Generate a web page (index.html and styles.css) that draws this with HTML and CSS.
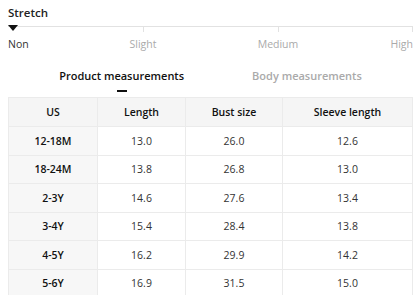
FILE: index.html
```html
<!DOCTYPE html>
<html lang="en">
<head>
  <meta charset="UTF-8" />
  <title>Size guide</title>
  <link rel="stylesheet" href="styles.css">
</head>
<body>
  <div class="page">

    <!-- === STRETCH === -->
    <div class="stretch">
      <div class="stretch-title">Stretch</div>
      <div class="track">
        <span class="pointer"></span>
        <span class="tick t1"></span>
        <span class="tick t2"></span>
        <span class="tick t3"></span>
      </div>
      <div class="levels">
        <span class="lvl non active">Non</span>
        <span class="lvl slight">Slight</span>
        <span class="lvl medium">Medium</span>
        <span class="lvl high">High</span>
      </div>
    </div>

    <!-- === TABS === -->
    <div class="tabs">
      <div class="tab active">Product measurements</div>
      <div class="tab">Body measurements</div>
    </div>

    <!-- === TABLE === -->
    <table class="sizes">
      <thead>
        <tr><th>US</th><th>Length</th><th>Bust size</th><th>Sleeve length</th></tr>
      </thead>
      <tbody>
        <tr><th>12-18M</th><td>13.0</td><td>26.0</td><td>12.6</td></tr>
        <tr><th>18-24M</th><td>13.8</td><td>26.8</td><td>13.0</td></tr>
        <tr><th>2-3Y</th><td>14.6</td><td>27.6</td><td>13.4</td></tr>
        <tr><th>3-4Y</th><td>15.4</td><td>28.4</td><td>13.8</td></tr>
        <tr><th>4-5Y</th><td>16.2</td><td>29.9</td><td>14.2</td></tr>
        <tr><th>5-6Y</th><td>16.9</td><td>31.5</td><td>15.0</td></tr>
      </tbody>
    </table>
  </div>
</body>
</html>
```

FILE: styles.css
```css
* {
  margin: 0;
  padding: 0;
  box-sizing: border-box;
}

body {
  font-family: "Open Sans", "Noto Sans", sans-serif;
  color: #222;
  background: #fff;
  overflow: hidden;
}

.page {
  width: 405px;
  margin-left: 8px;
}

/* stretch scale */
.stretch-title {
  font-size: 11.5px;
  font-weight: 600;
  line-height: 16px;
  padding-top: 5px;
}

.track {
  position: relative;
  height: 1px;
  margin-top: 5px;
  background: #e2e2e2;
}

.tick {
  position: absolute;
  top: 1px;
  width: 1px;
  height: 5px;
  background: #e2e2e2;
}

.t1 { left: 135px; }
.t2 { left: 270px; }
.t3 { left: 404px; }

.pointer {
  position: absolute;
  left: 0;
  top: -1px;
  width: 0;
  height: 0;
  border-left: 5px solid transparent;
  border-right: 5px solid transparent;
  border-top: 6px solid #111;
}

.levels {
  display: grid;
  grid-template-columns: repeat(6, 1fr);
  font-size: 10.5px;
  line-height: 16px;
  margin-top: 9px;
  color: #aaa;
}

.lvl.active { color: #333; }
.non { grid-column: 1; }
.slight { grid-column: 2 / 4; text-align: center; }
.medium { grid-column: 4 / 6; text-align: center; }
.high { grid-column: 6; text-align: right; }

/* tabs */
.tabs {
  display: flex;
  justify-content: center;
  gap: 68px;
  margin-top: 16px;
  font-size: 11px;
  font-weight: 600;
  line-height: 16px;
}

.tab {
  position: relative;
  color: #aaa;
  padding-bottom: 13px;
}

.tab.active {
  color: #111;
}

.tab.active::after {
  content: "";
  position: absolute;
  left: 50%;
  bottom: 5px;
  width: 10px;
  height: 2px;
  margin-left: -5px;
  background: #111;
}

/* table */
.sizes {
  width: 405px;
  border-collapse: collapse;
  font-size: 10.5px;
  table-layout: fixed;
}

.sizes th,
.sizes td {
  border: 1px solid #ebebeb;
  text-align: center;
  height: 28.5px;
  font-weight: 400;
  color: #333;
}

.sizes thead th {
  height: 29px;
  background: #f5f5f5;
  font-weight: 600;
  color: #111;
}

.sizes tbody th {
  background: #f7f7f7;
  font-weight: 600;
  color: #111;
}

.sizes th:nth-child(1) { width: 89px; }
.sizes th:nth-child(2) { width: 88px; }
.sizes th:nth-child(3) { width: 97px; }
```
